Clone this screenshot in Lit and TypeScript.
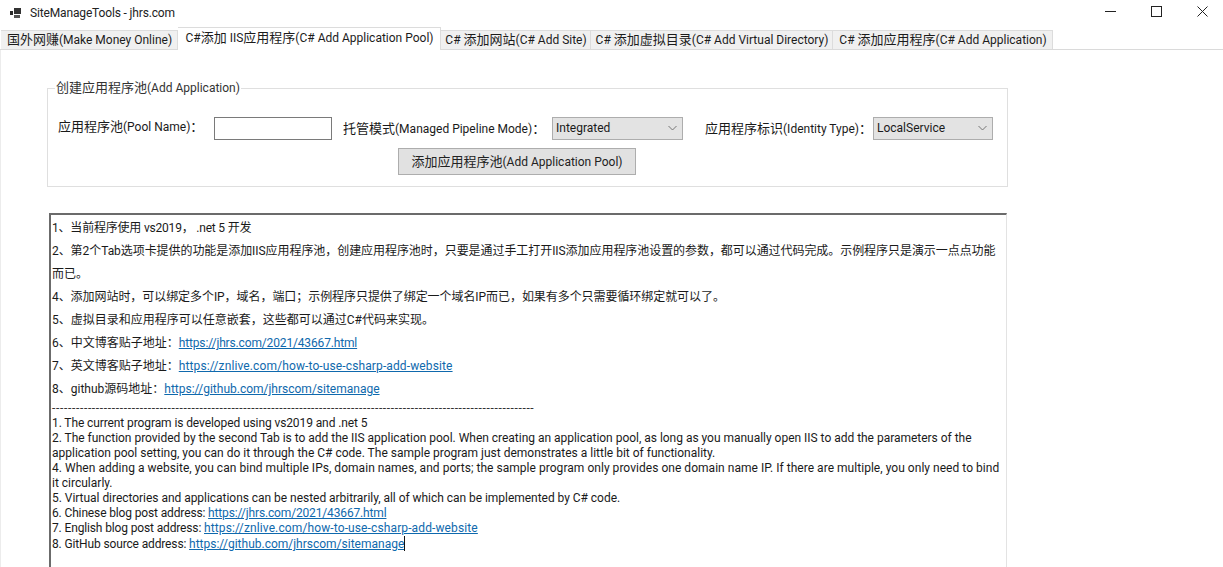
import { LitElement, html, css } from "lit";
import { customElement } from "lit/decorators.js";

const tabs = [
  { label: "国外网赚(Make Money Online)", w: 177, active: false },
  { label: "C#添加 IIS应用程序(C# Add Application Pool)", w: 263, active: true },
  { label: "C# 添加网站(C# Add Site)", w: 150, active: false },
  { label: "C# 添加虚拟目录(C# Add Virtual Directory)", w: 242, active: false },
  { label: "C# 添加应用程序(C# Add Application)", w: 220, active: false },
];

// Form and tab captions mix 12px Latin with slightly larger CJK runs.
const mixed = (s: string) =>
  html`<span>${s
    .split(/([\u3000-\u9fff\uff00-\uffef]+)/)
    .map((part, i) => (i % 2 ? html`<span class="z">${part}</span>` : part))}</span>`;

const link = (u: string, cls = "") => html`<a class=${cls} href="#">${u}</a>`;

@customElement("app-root")
export class AppRoot extends LitElement {
  static styles = css`
    :host {
      display: flex;
      flex-direction: column;
      width: 1223px;
      height: 567px;
      overflow: hidden;
      background: #fff;
      color: #1a1a1a;
      font-family: Roboto, "Noto Sans CJK SC", sans-serif;
      font-size: 12px;
    }
    .z { font-size: 13px; }
    .title {
      display: flex;
      align-items: center;
      height: 25px;
      padding-bottom: 2px;
      flex: none;
      padding-left: 10px;
      color: #222;
    }
    .title .name { margin-left: 7px; font-size: 12px; letter-spacing: -0.15px; }
    .title .controls { margin: 0 -2px 0 auto; display: flex; align-self: flex-start; }
    .controls .ctl {
      width: 46px;
      height: 23px;
      display: flex;
      align-items: center;
      justify-content: center;
    }
    .tabs {
      display: flex;
      align-items: flex-end;
      height: 22px;
      flex: none;
      padding-left: 1px;
      border-bottom: 1px solid #dadada;
    }
    .tab {
      height: 19px;
      box-sizing: border-box;
      display: flex;
      align-items: center;
      justify-content: center;
      background: #f0f0f0;
      border: 1px solid #dcdcdc;
      border-bottom: none;
      border-left: none;
      padding: 0 0 3px 1px;
      white-space: nowrap;
      color: #1c1c1c;
    }
    .tab.active {
      height: 23px;
      margin-bottom: -1px;
      background: #fff;
      padding-bottom: 6px;
    }
    .page {
      flex: 1;
      min-height: 0;
      display: flex;
      flex-direction: column;
      padding: 31px 0 0 47px;
      border-left: 1px solid #ececec;
    }
    fieldset {
      box-sizing: border-box;
      width: 961px;
      height: 106px;
      margin: 0 0 0 -1px;
      padding: 0;
      border: 1px solid #dfdfdf;
      flex: none;
      min-width: 0;
    }
    legend {
      margin-left: 7px;
      padding: 0 1px;
      line-height: 13px;
      color: #333;
    }
    .row {
      display: flex;
      align-items: center;
      height: 24px;
      margin-top: 21px;
      padding-left: 10px;
      white-space: nowrap;
    }
    .row .l1 { width: 156px; margin-top: -5px; }
    .input {
      box-sizing: border-box;
      width: 118px;
      height: 23px;
      border: 1px solid #7a7a7a;
      background: #fff;
    }
    .row .l2 { width: 209px; margin-left: 11px; margin-top: -1px; }
    .row .l3 { width: 168px; margin-left: 22px; margin-top: -1px; }
    .select {
      box-sizing: border-box;
      height: 23px;
      background: #e3e3e3;
      border: 1px solid #adadad;
      display: flex;
      align-items: center;
      justify-content: space-between;
      padding: 0 5px 0 3px;
      flex: none;
    }
    .s1 { width: 131px; }
    .s2 { width: 120px; }
    .btnrow { display: flex; margin-top: 8px; padding-left: 350px; }
    .btn {
      box-sizing: border-box;
      width: 238px;
      height: 27px;
      background: #e1e1e1;
      border: 1px solid #adadad;
      display: flex;
      align-items: center;
      justify-content: center;
      padding-bottom: 3px;
      color: #222;
    }
    .text {
      box-sizing: border-box;
      flex: 1;
      min-height: 0;
      width: 958px;
      margin: 26px 0 0 1px;
      border-top: 2px solid #6b6b6b;
      border-left: 2px solid #6b6b6b;
      border-right: 1px solid #e3e3e3;
      padding: 2px 0 0 1px;
      overflow: hidden;
      white-space: nowrap;
      color: #1a1a1a;
      font-size: 12px;
    }
    .cn { height: 23px; line-height: 23px; }
    .en { height: 15px; line-height: 15px; }
    .sep { height: 15px; line-height: 15px; letter-spacing: 0.67px; color: #333; }
    .text a { color: #0f69ad; text-decoration: underline; letter-spacing: 0; }
    .text a.tight { letter-spacing: -0.15px; }
    .text a.wide { letter-spacing: 0.12px; }
    .c1 { letter-spacing: -0.2px; }
    .c2 { letter-spacing: -0.06px; }
    .t1 { letter-spacing: -0.1px; }
    .t2 { letter-spacing: -0.02px; }
    .t4 { letter-spacing: 0.035px; }
    .t5 { letter-spacing: -0.035px; }
    .t6 { letter-spacing: -0.14px; }
    .caret { display: inline-block; width: 1px; height: 15px; background: #111; vertical-align: -3px; }
  `;

  render() {
    return html`
      <div class="title">
        <svg width="13" height="12" viewBox="0 0 13 12">
          <rect x="0" y="4" width="3" height="4" fill="#2b2b2b" />
          <rect x="4" y="1" width="7" height="6" fill="#333" />
          <rect x="4" y="8" width="6" height="3" fill="#555" />
        </svg>
        <span class="name">SiteManageTools - jhrs.com</span>
        <div class="controls">
          <div class="ctl">
            <svg width="11" height="11" viewBox="0 0 11 11"><path d="M0 5.5h11" stroke="#222" fill="none" /></svg>
          </div>
          <div class="ctl">
            <svg width="11" height="11" viewBox="0 0 11 11"><rect x=".5" y=".5" width="10" height="10" stroke="#222" fill="none" /></svg>
          </div>
          <div class="ctl">
            <svg width="11" height="11" viewBox="0 0 11 11"><path d="M.5 .5l10 10M10.5 .5l-10 10" stroke="#222" fill="none" /></svg>
          </div>
        </div>
      </div>
      <div class="tabs">
        ${tabs.map(
          (t) => html`<div class="tab ${t.active ? "active" : ""}" style="width:${t.w}px">${mixed(t.label)}</div>`
        )}
      </div>
      <div class="page">
        <fieldset>
          <legend>${mixed("创建应用程序池(Add Application)")}</legend>
          <div class="row">
            <div class="l1">${mixed("应用程序池(Pool Name)：")}</div>
            <div class="input"></div>
            <div class="l2">${mixed("托管模式(Managed Pipeline Mode)：")}</div>
            <div class="select s1">Integrated ${this.chev()}</div>
            <div class="l3">${mixed("应用程序标识(Identity Type)：")}</div>
            <div class="select s2">LocalService ${this.chev()}</div>
          </div>
          <div class="btnrow"><div class="btn">${mixed("添加应用程序池(Add Application Pool)")}</div></div>
        </fieldset>
        <div class="text">
          <div class="cn c1">1、当前程序使用 vs2019， .net 5 开发</div>
          <div class="cn c2">2、第2个Tab选项卡提供的功能是添加IIS应用程序池，创建应用程序池时，只要是通过手工打开IIS添加应用程序池设置的参数，都可以通过代码完成。示例程序只是演示一点点功能</div>
          <div class="cn">而已。</div>
          <div class="cn c2">4、添加网站时，可以绑定多个IP，域名，端口；示例程序只提供了绑定一个域名IP而已，如果有多个只需要循环绑定就可以了。</div>
          <div class="cn">5、虚拟目录和应用程序可以任意嵌套，这些都可以通过C#代码来实现。</div>
          <div class="cn">6、中文博客贴子地址：${link("https://jhrs.com/2021/43667.html", "tight")}</div>
          <div class="cn">7、英文博客贴子地址：${link("https://znlive.com/how-to-use-csharp-add-website", "wide")}</div>
          <div class="cn">8、github源码地址：${link("https://github.com/jhrscom/sitemanage")}</div>
          <div class="sep">${"-".repeat(121)}</div>
          <div class="en t1">1. The current program is developed using vs2019 and .net 5</div>
          <div class="en t2">2. The function provided by the second Tab is to add the IIS application pool. When creating an application pool, as long as you manually open IIS to add the parameters of the</div>
          <div class="en">application pool setting, you can do it through the C# code. The sample program just demonstrates a little bit of functionality.</div>
          <div class="en t4">4. When adding a website, you can bind multiple IPs, domain names, and ports; the sample program only provides one domain name IP. If there are multiple, you only need to bind</div>
          <div class="en">it circularly.</div>
          <div class="en t5">5. Virtual directories and applications can be nested arbitrarily, all of which can be implemented by C# code.</div>
          <div class="en t6">6. Chinese blog post address: ${link("https://jhrs.com/2021/43667.html", "tight")}</div>
          <div class="en t6">7. English blog post address: ${link("https://znlive.com/how-to-use-csharp-add-website", "wide")}</div>
          <div class="en t6">8. GitHub source address: ${link("https://github.com/jhrscom/sitemanage")}<span class="caret"></span></div>
        </div>
      </div>
    `;
  }

  chev() {
    return html`<svg width="9" height="6" viewBox="0 0 9 6"><path d="M.5 1l4 4 4-4" stroke="#777" fill="none" /></svg>`;
  }
}
